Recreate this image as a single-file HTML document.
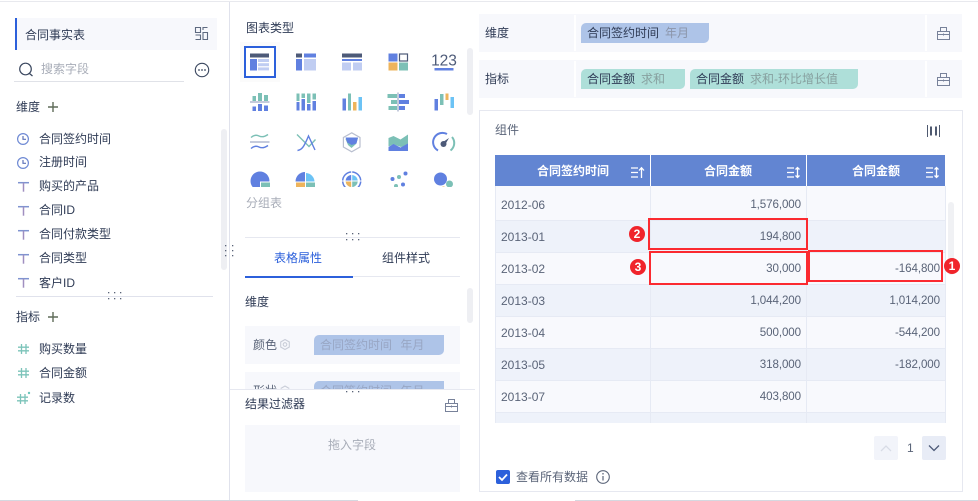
<!DOCTYPE html>
<html lang="zh"><head><meta charset="utf-8"><title>合同事实表</title>
<style>
html,body{margin:0;padding:0;background:#fff}
#p{position:relative;width:978px;height:501px;overflow:hidden;background:#fff;font:12px/16px "Liberation Sans","Noto Sans CJK SC",sans-serif;color:#2f3b55}
#p div{position:absolute}
.t{white-space:nowrap;height:16px}
.b{background:#f7f8fc}
.g{color:#a8adb8}
.m{color:#5a6478}
.pill{border-radius:5px 0 5px 0}
.s{background:#eeeff3;border-radius:3px;width:6px}
.th{color:#fff;font-weight:bold;white-space:nowrap;height:16px;top:163px;text-align:center}
.r{left:495px;width:450px;height:32px;box-sizing:border-box;border-bottom:1px solid #e6eaf4}
.o{background:#f8f9fd}.e{background:#eef2fa}
.d{left:501px;color:#5a6478;white-space:nowrap}
.n{text-align:right;width:100px;color:#5a6478;font-size:11.6px;letter-spacing:-.1px;white-space:nowrap}
.n1{left:701px}.n2{left:840px}
.rb{border:2px solid #fb2a30;box-sizing:border-box}
.bd{width:16px;height:16px;border-radius:50%;background:#f0242b;color:#fff;font-size:12px;font-weight:bold;line-height:16px;text-align:center}
</style></head><body><div id="p">

<div style="left:0;top:1px;width:978px;height:1px;background:#e8e9ee"></div>
<div style="left:229px;top:2px;width:1px;height:498px;background:#e0e2ec"></div>
<div style="left:0;top:500px;width:358px;height:1px;background:#d5d8e0"></div>
<div style="left:575px;top:500px;width:403px;height:1px;background:#d5d8e0"></div>

<!-- left panel bg -->
<div class="b" style="left:15px;top:18px;width:202px;height:32px"></div>
<div style="left:15px;top:18px;width:2px;height:32px;background:#2c60db"></div>
<div style="left:14px;top:81px;width:170px;height:1px;background:#e0e2e8"></div>
<div class="s" style="left:221px;top:129px;height:141px"></div>
<div style="left:16px;top:296px;width:197px;height:1px;background:#e0e2ec"></div>

<!-- middle bg -->
<div class="s" style="left:467px;top:48px;height:67px"></div>
<div style="left:245px;top:237px;width:215px;height:1px;background:#e6e8f0"></div>
<div style="left:245px;top:276px;width:215px;height:1px;background:#e6e8f0"></div>
<div style="left:245px;top:276px;width:108px;height:2px;background:#2c60db"></div>
<div class="s" style="left:467px;top:288px;height:35px"></div>
<div class="b" style="left:245px;top:326px;width:215px;height:38px"></div>
<div class="pill" style="left:314px;top:335px;width:130px;height:20px;background:#aec4e8"></div>
<div class="t" style="left:320px;top:337px;color:#98a6c4;word-spacing:5px">合同签约时间 年月</div>
<div class="t m" style="left:253px;top:337px">颜色</div>
<div class="b" style="left:245px;top:372px;width:215px;height:38px"></div>
<div class="pill" style="left:314px;top:381px;width:130px;height:20px;background:#aec4e8"></div>
<div class="t" style="left:320px;top:383px;color:#98a6c4;word-spacing:5px">合同签约时间 年月</div>
<div class="t m" style="left:253px;top:383px">形状</div>
<div style="left:230px;top:389px;width:245px;height:111px;background:#fff;border-top:1px solid #e6e8f0;box-sizing:border-box"></div>
<div class="b" style="left:245px;top:425px;width:215px;height:67px"></div>

<!-- right bg -->
<div class="b" style="left:479px;top:14px;width:483px;height:38px"></div>
<div class="b" style="left:479px;top:60px;width:483px;height:38px"></div>
<div style="left:574px;top:15px;width:2px;height:36px;background:#fff"></div>
<div style="left:925px;top:15px;width:2px;height:36px;background:#fff"></div>
<div style="left:574px;top:61px;width:2px;height:36px;background:#fff"></div>
<div style="left:925px;top:61px;width:2px;height:36px;background:#fff"></div>
<div class="pill" style="left:581px;top:23px;width:128px;height:20px;background:#aec4e8"></div>
<div class="pill" style="left:581px;top:69px;width:104px;height:20px;background:#aedfd9"></div>
<div class="pill" style="left:690px;top:69px;width:168px;height:20px;background:#aedfd9"></div>
<div style="left:479px;top:110px;width:484px;height:382px;border:1px solid #e6e8f0;box-sizing:border-box"></div>

<!-- table -->
<div style="left:495px;top:155px;width:450px;height:31px;background:#6285d2"></div>
<div class="r o" style="top:186px;height:35px"></div>
<div class="r e" style="top:221px"></div>
<div class="r o" style="top:253px"></div>
<div class="r e" style="top:285px"></div>
<div class="r o" style="top:317px"></div>
<div class="r e" style="top:349px"></div>
<div class="r o" style="top:381px"></div>
<div class="e" style="left:495px;top:413px;width:450px;height:10px"></div>
<div style="left:495px;top:186px;width:1px;height:237px;background:#e6eaf4"></div>
<div style="left:650px;top:186px;width:1px;height:237px;background:#e6eaf4"></div>
<div style="left:806px;top:186px;width:1px;height:237px;background:#e6eaf4"></div>
<div style="left:945px;top:186px;width:1px;height:237px;background:#e6eaf4"></div>
<div style="left:650px;top:155px;width:1px;height:31px;background:#fff"></div>
<div style="left:806px;top:155px;width:1px;height:31px;background:#fff"></div>
<div class="s" style="left:948px;top:202px;height:73px;background:#f0f1f4"></div>

<div style="left:874px;top:436px;width:24px;height:24px;background:#f2f4fa;border-radius:2px"></div>
<div style="left:922px;top:436px;width:24px;height:24px;background:#e8ecf6;border-radius:2px"></div>
<div style="left:496px;top:470px;width:14px;height:14px;background:#2c60db;border-radius:2px"></div>

<!-- icons -->
<svg width="978" height="501" viewBox="0 0 978 501" style="position:absolute;left:0;top:0">
<defs>
<clipPath id="c4"><rect x="240" y="165" width="225" height="22"/></clipPath>
<g id="lock" fill="none" stroke="#78829a" stroke-width="1"><path d="M.5 4.500h12v8h-12zM3.500 4.500V.5h6v4M.5 7.500h12M6.500 6.500v2"/></g>
<g id="clk" fill="none" stroke="#6f8ad4" stroke-width="1.2"><circle cx="6" cy="6" r="5.400"/><path d="M6 3v3.300h3" stroke="#5d72b8"/></g>
<g id="T" fill="none" stroke="#7f93d0" stroke-width="1.500"><path d="M0 .7h11"/><path d="M5.500 .7v9" stroke="#a08fc0"/></g>
<g id="H" fill="none" stroke="#7cc4ba" stroke-width="1.300"><path d="M3.500 0v10M8 0v10M0 3.200h11M0 6.800h11"/></g>
<g id="plus" fill="none" stroke="#5f6b58" stroke-width="1.400"><path d="M0 5h10M5 0v10"/></g>
<g id="srt" fill="none" stroke="#fff" stroke-width="1.300"><path d="M0 1h7M0 5.500h7M0 10h7"/></g>
</defs>

<!-- left icons -->
<g fill="none" stroke="#5e6a80" stroke-width="1.100"><path d="M195.500 27.500h5v5h-5zM195.500 35h5v4.500h-5M203 32.500h4.500v7H203zM203 30v-2.500h4.500"/></g>
<g fill="none" stroke="#3a475f" stroke-width="1.200"><circle cx="25.500" cy="69" r="5.800"/><path d="M29.500 73.500l3 2.500"/></g>
<circle cx="202" cy="70" r="6.700" fill="none" stroke="#3a475f" stroke-width="1.100"/>
<g fill="#3a475f"><circle cx="199" cy="70" r=".9"/><circle cx="202" cy="70" r=".9"/><circle cx="205" cy="70" r=".9"/></g>
<use href="#plus" x="48" y="102"/><use href="#plus" x="48" y="312"/>
<use href="#clk" x="17" y="133"/><use href="#clk" x="17" y="157"/>
<use href="#T" x="18" y="182"/><use href="#T" x="18" y="206"/><use href="#T" x="18" y="230"/><use href="#T" x="18" y="254"/><use href="#T" x="18" y="278"/>
<use href="#H" x="18" y="344"/><use href="#H" x="18" y="368"/><use href="#H" x="17" y="394"/>
<circle cx="29" cy="393" r="1.200" fill="#6cc6bb"/>
<g fill="#5a6478"><rect x="108" y="292" width="1.300" height="1.300"/><rect x="114" y="292" width="1.300" height="1.300"/><rect x="120" y="292" width="1.300" height="1.300"/><rect x="108" y="298" width="1.300" height="1.300"/><rect x="114" y="298" width="1.300" height="1.300"/><rect x="120" y="298" width="1.300" height="1.300"/>
<rect x="225" y="245" width="1.300" height="1.300"/><rect x="232" y="245" width="1.300" height="1.300"/><rect x="225" y="250" width="1.300" height="1.300"/><rect x="232" y="250" width="1.300" height="1.300"/><rect x="225" y="255" width="1.300" height="1.300"/><rect x="232" y="255" width="1.300" height="1.300"/>
<rect x="346" y="233" width="1.300" height="1.300"/><rect x="352" y="233" width="1.300" height="1.300"/><rect x="358" y="233" width="1.300" height="1.300"/><rect x="346" y="239" width="1.300" height="1.300"/><rect x="352" y="239" width="1.300" height="1.300"/><rect x="358" y="239" width="1.300" height="1.300"/>
<rect x="346" y="391" width="1.300" height="1.300"/><rect x="352" y="391" width="1.300" height="1.300"/><rect x="358" y="391" width="1.300" height="1.300"/></g>

<!-- selected chart -->
<rect x="240" y="42" width="40" height="40" fill="#000" opacity=".015"/>
<rect x="245" y="47" width="30" height="30" fill="#fff" stroke="#2c60db" stroke-width="2"/>
<!-- row 1 -->
<rect x="250" y="53.500" width="19" height="4" fill="#4d5a78"/><rect x="250" y="59" width="7" height="11.500" fill="#6080e0"/><rect x="258" y="59" width="11" height="3" fill="#c0cdf2"/><rect x="258" y="63.200" width="11" height="3" fill="#c0cdf2"/><rect x="258" y="67.400" width="11" height="3" fill="#c0cdf2"/>
<rect x="296" y="53.500" width="6" height="4" fill="#4d5a78"/><rect x="304" y="53.500" width="12" height="4" fill="#6080e0"/><rect x="296" y="59" width="6" height="11.500" fill="#6080e0"/><rect x="304" y="59" width="12" height="11.500" fill="#c0cdf2"/>
<rect x="342" y="53.500" width="20" height="4" fill="#4d5a78"/><rect x="342" y="59" width="20" height="2" fill="#6080e0"/><rect x="342" y="62.500" width="9" height="8" fill="#c0cdf2"/><rect x="353" y="62.500" width="9" height="8" fill="#c0cdf2"/>
<rect x="388.500" y="53.500" width="9" height="8" fill="#6080e0"/><rect x="399.500" y="54" width="8" height="7" fill="#fff" stroke="#4d5a78" stroke-width="1.200"/><rect x="388.500" y="62.500" width="9" height="8" fill="#eeb45c"/><rect x="399" y="62.500" width="9" height="8" fill="#7cc0b6"/>
<text x="444" y="65.500" font-family="Liberation Sans" font-size="15.500" fill="#4d5a78" text-anchor="middle">123</text>
<rect x="434.500" y="68" width="19" height="2.500" fill="#6080e0"/>
<!-- row 2 -->
<g fill="#7cc0b6"><rect x="252.500" y="96" width="3.500" height="5"/><rect x="258" y="93" width="4" height="8"/><rect x="264" y="95" width="4" height="6"/></g>
<rect x="250" y="101" width="19.500" height="2" fill="#c5cbdc"/>
<g fill="#6080e0"><rect x="252.500" y="106.500" width="3.500" height="4.500"/><rect x="258" y="104" width="4" height="7"/><rect x="264" y="105.500" width="4" height="5.500"/></g>
<g fill="#7cc0b6"><rect x="296.500" y="93.500" width="3" height="7.500"/><rect x="301.500" y="93.500" width="3.500" height="4.500"/><rect x="307" y="93.500" width="3.500" height="9.500"/><rect x="312.500" y="93.500" width="3.500" height="6"/></g>
<g fill="#6080e0"><rect x="296.500" y="102" width="3" height="8.500"/><rect x="301.500" y="99" width="3.500" height="11.500"/><rect x="307" y="104" width="3.500" height="6.500"/><rect x="312.500" y="101" width="3.500" height="9.500"/></g>
<rect x="342.500" y="98.500" width="3.500" height="12" fill="#6080e0"/><rect x="348" y="93.500" width="3" height="17" fill="#7cc0b6"/><rect x="353" y="102" width="3.500" height="8.500" fill="#eeb45c"/><rect x="358.500" y="97" width="3.500" height="13.500" fill="#6cc3f5"/>
<g fill="#7cc0b6"><rect x="387.500" y="94" width="9.500" height="4"/><rect x="391" y="100" width="6" height="4"/><rect x="388.500" y="106" width="8.500" height="4"/></g>
<g fill="#6080e0"><rect x="399" y="94" width="6" height="4"/><rect x="399" y="100" width="10" height="4"/><rect x="399" y="106" width="6" height="4"/></g>
<rect x="397" y="92.500" width="2" height="19" fill="#c5cbdc"/>
<rect x="434.500" y="99" width="3.500" height="11.500" fill="#6080e0"/><rect x="440" y="94" width="3.500" height="11" fill="#7cc0b6"/><rect x="445.500" y="93.500" width="3" height="6.500" fill="#eeb45c"/><rect x="450.500" y="97" width="3.500" height="11" fill="#6cc3f5"/>
<!-- row 3 -->
<path d="M251 137.500q4-3.500 8-1.500t9-1.500" fill="none" stroke="#7cc0b6" stroke-width="1.400"/>
<rect x="250" y="141" width="19.500" height="2" fill="#c5cbdc"/>
<path d="M251 148.500q4-3.500 8-1.500t9-1.500" fill="none" stroke="#6080e0" stroke-width="1.400"/>
<path d="M297 134.500l12 12 6.500-7" fill="none" stroke="#7cc0b6" stroke-width="1.400"/>
<path d="M297.500 150.500q4-.5 6.500-5t4.500-9.500l6.500 14" fill="none" stroke="#6080e0" stroke-width="1.400"/>
<path d="M351.700 132.800l8.300 4.700v9.500l-8.300 4.800-8.300-4.800v-9.500z" fill="#fff" stroke="#b9bfcf" stroke-width="1.200"/>
<path d="M345.500 139l4-1 2.500 1.500 6-1.500-2 6-4.500 4-3.500-3z" fill="#7cc0b6"/>
<path d="M345.500 137.500h12.500l-1.500 6-4.800 1.500-4.500-2.500z" fill="#6080e0"/>
<path d="M388.500 138l5-2 7 3.500 7.500-5v10.500l-7 2-7.500-2.500-5 2z" fill="#7cc0b6"/>
<path d="M388.500 147l5-3 7 3.500 7.500-4v7.500h-19.500z" fill="#6080e0"/>
<path d="M438 150.500a9.300 9.300 0 0 1 9-16.500" fill="none" stroke="#6080e0" stroke-width="2"/>
<path d="M452 137a9.300 9.300 0 0 1 -1.500 13.500" fill="none" stroke="#7cc0b6" stroke-width="2"/>
<circle cx="443.500" cy="144" r="3" fill="#4d5a78"/><path d="M443 142l6-4-3.500 6z" fill="#4d5a78"/>
<!-- row 4 -->
<g clip-path="url(#c4)">
<circle cx="260" cy="181" r="9.500" fill="#6080e0"/><rect x="260.500" y="182" width="10" height="8" fill="#7cc0b6" stroke="#fff"/>
<path d="M305 172a9.500 9.500 0 0 0 -9.500 9.500h9.500z" fill="#6080e0"/><path d="M306 173v8.500h8.500a9 9 0 0 0-8.500-8.500z" fill="#6cc3f5"/><rect x="296" y="182.500" width="9" height="5" fill="#eeb45c"/><rect x="306" y="182.500" width="9" height="5" fill="#7cc0b6"/>
<circle cx="351.700" cy="181" r="9" fill="none" stroke="#6080e0" stroke-width="1.500"/><circle cx="351.700" cy="181" r="6" fill="#6cc3f5"/><path d="M351.700 181v-6a6 6 0 0 0-6 6z" fill="#6080e0"/><path d="M351.700 181v6a6 6 0 0 1-6-6z" fill="#eeb45c"/><path d="M351.700 181h6a6 6 0 0 1-6 6z" fill="#7cc0b6"/><path d="M342 181h20M351.700 171v20" stroke="#fff"/>
<circle cx="392.500" cy="179" r="2" fill="#6080e0"/><circle cx="405.500" cy="173.500" r="2" fill="#6080e0"/><circle cx="399" cy="177" r="2" fill="#7cc0b6"/><circle cx="403" cy="184.500" r="2" fill="#6080e0"/><circle cx="396" cy="186" r="2" fill="#7cc0b6"/>
<circle cx="440.500" cy="179" r="6.500" fill="#6080e0"/><circle cx="449.500" cy="184" r="3.500" fill="#7cc0b6"/><circle cx="443.500" cy="188.500" r="2" fill="#eeb45c"/>
</g>
<!-- gears -->
<g fill="none" stroke="#c9cdd8" stroke-width="1.100"><path d="M285 339.500l4.300 2.500v5l-4.300 2.500-4.300-2.500v-5z"/><circle cx="285" cy="344.500" r="1.800"/></g>
<path d="M280.700 388.500l4.300-2.500 4.300 2.500" fill="none" stroke="#c9cdd8" stroke-width="1.100"/>
<use href="#lock" x="445" y="399"/>
<use href="#lock" x="937" y="27"/><use href="#lock" x="937" y="73"/>
<!-- component icon -->
<g fill="none" stroke="#4f5a70" stroke-width="1"><path d="M927.500 125v12M939.500 125v12"/></g>
<g fill="#4f5a70"><rect x="930" y="126.500" width="2" height="9"/><rect x="935" y="126.500" width="2" height="9"/></g>
<!-- sort -->
<use href="#srt" x="631" y="167"/><path d="M641.500 178v-10M639 170.500l2.500-2.800 2.500 2.800" fill="none" stroke="#fff" stroke-width="1.300"/>
<use href="#srt" x="787" y="167"/><path d="M797.500 177v-9M795.500 169.500l2-2 2 2M795.500 175.500l2 2 2-2" fill="none" stroke="#fff" stroke-width="1.300"/>
<use href="#srt" x="926" y="167"/><path d="M936.500 177v-9M934.500 169.500l2-2 2 2M934.500 175.500l2 2 2-2" fill="none" stroke="#fff" stroke-width="1.300"/>
<!-- pager -->
<path d="M881 451l5-5 5 5" fill="none" stroke="#d8dce6" stroke-width="1.300"/>
<path d="M929 445.500l5 5 5-5" fill="none" stroke="#4d5a78" stroke-width="1.300"/>
<path d="M499 477l3 3 5-5.500" fill="none" stroke="#fff" stroke-width="1.800"/>
<circle cx="603" cy="477" r="6.300" fill="none" stroke="#5a6478" stroke-width="1.100"/><path d="M603 476v4.500" stroke="#5a6478" stroke-width="1.200"/><circle cx="603" cy="473.800" r=".8" fill="#5a6478"/>
</svg>

<!-- left text -->
<div class="t" style="left:25px;top:27px">合同事实表</div>
<div class="t g" style="left:41px;top:61px">搜索字段</div>
<div class="t" style="left:16px;top:99px">维度</div>
<div class="t" style="left:39px;top:131px">合同签约时间</div>
<div class="t" style="left:39px;top:154px">注册时间</div>
<div class="t" style="left:39px;top:178px">购买的产品</div>
<div class="t" style="left:39px;top:202px">合同ID</div>
<div class="t" style="left:39px;top:226px">合同付款类型</div>
<div class="t" style="left:39px;top:250px">合同类型</div>
<div class="t" style="left:39px;top:275px">客户ID</div>
<div class="t" style="left:16px;top:309px">指标</div>
<div class="t" style="left:39px;top:341px">购买数量</div>
<div class="t" style="left:39px;top:365px">合同金额</div>
<div class="t" style="left:39px;top:390px">记录数</div>

<!-- middle text -->
<div class="t" style="left:246px;top:20px">图表类型</div>
<div class="t g" style="left:246px;top:195px">分组表</div>
<div class="t" style="left:274px;top:250px;color:#2c60db">表格属性</div>
<div class="t" style="left:382px;top:250px">组件样式</div>
<div class="t" style="left:245px;top:294px">维度</div>
<div class="t" style="left:245px;top:396px">结果过滤器</div>
<div class="t g" style="left:328px;top:437px">拖入字段</div>

<!-- right text -->
<div class="t" style="left:485px;top:25px">维度</div>
<div class="t" style="left:485px;top:71px">指标</div>
<div class="t" style="left:587px;top:25px">合同签约时间</div><div class="t" style="left:665px;top:25px;color:#8b95aa">年月</div>
<div class="t" style="left:587px;top:71px">合同金额</div><div class="t" style="left:641px;top:71px;color:#87a09f">求和</div>
<div class="t" style="left:696px;top:71px">合同金额</div><div class="t" style="left:750px;top:71px;color:#87a09f">求和-环比增长值</div>
<div class="t m" style="left:495px;top:122px">组件</div>

<div class="th" style="left:533px;width:80px">合同签约时间</div>
<div class="th" style="left:688px;width:80px">合同金额</div>
<div class="th" style="left:836px;width:80px">合同金额</div>

<div class="d" style="top:197px">2012-06</div><div class="n n1" style="top:197px">1,576,000</div>
<div class="d" style="top:229px">2013-01</div><div class="n n1" style="top:229px">194,800</div>
<div class="d" style="top:261px">2013-02</div><div class="n n1" style="top:261px">30,000</div><div class="n n2" style="top:261px">-164,800</div>
<div class="d" style="top:293px">2013-03</div><div class="n n1" style="top:293px">1,044,200</div><div class="n n2" style="top:293px">1,014,200</div>
<div class="d" style="top:325px">2013-04</div><div class="n n1" style="top:325px">500,000</div><div class="n n2" style="top:325px">-544,200</div>
<div class="d" style="top:357px">2013-05</div><div class="n n1" style="top:357px">318,000</div><div class="n n2" style="top:357px">-182,000</div>
<div class="d" style="top:389px">2013-07</div><div class="n n1" style="top:389px">403,800</div>

<div class="rb" style="left:648px;top:218px;width:160px;height:32px"></div>
<div class="rb" style="left:649px;top:251px;width:159px;height:34px"></div>
<div class="rb" style="left:808px;top:250px;width:135px;height:32px"></div>
<div class="bd" style="left:629px;top:226px">2</div>
<div class="bd" style="left:630px;top:259px">3</div>
<div class="bd" style="left:944px;top:258px">1</div>

<div class="t m" style="left:907px;top:440px">1</div>
<div class="t m" style="left:516px;top:469px">查看所有数据</div>
</div></body></html>
